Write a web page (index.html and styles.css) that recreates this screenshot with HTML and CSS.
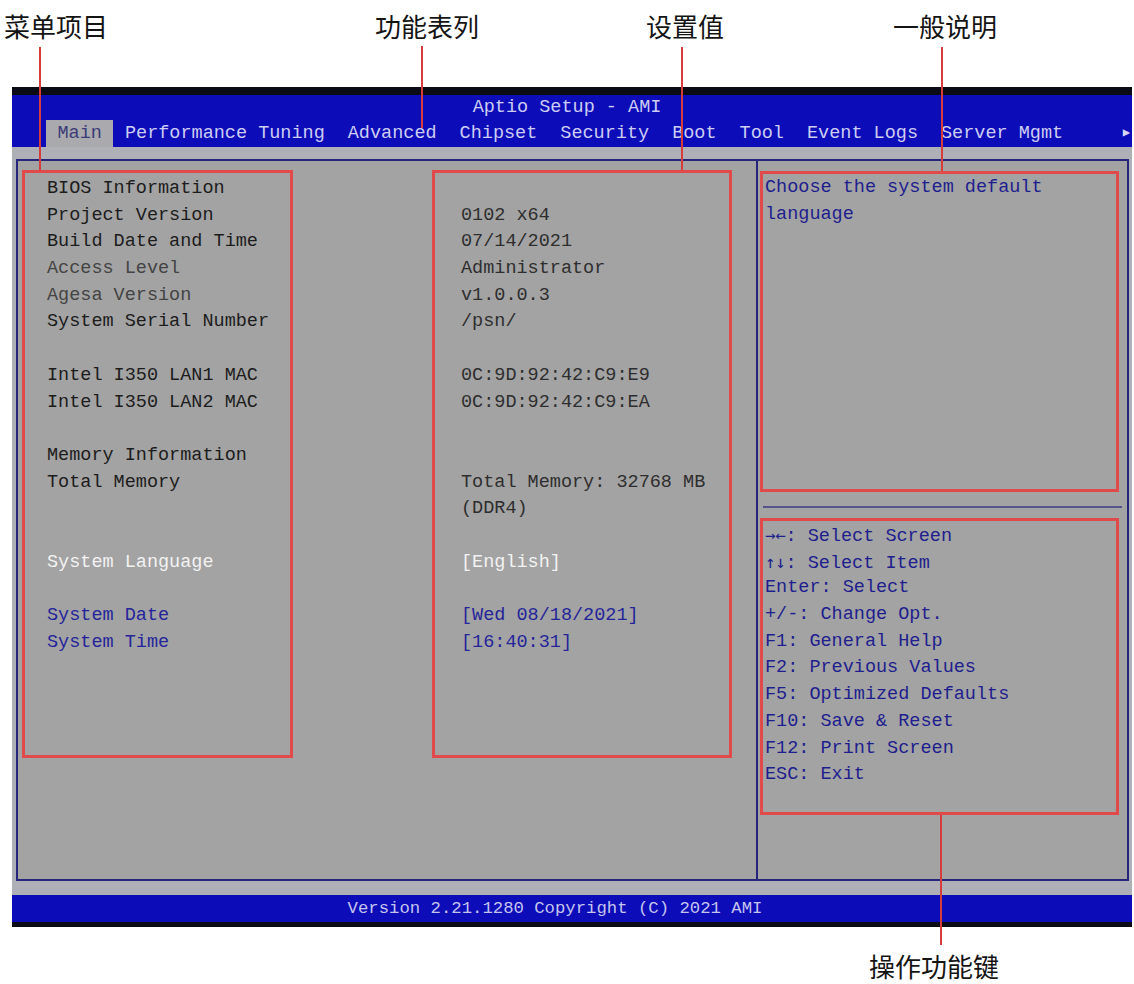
FILE: index.html
```html
<!DOCTYPE html>
<html lang="zh-CN">
<head>
  <meta charset="UTF-8">
  <meta name="viewport" content="width=device-width, initial-scale=1.0">
  <title>Aptio Setup - AMI</title>
  <link rel="stylesheet" href="styles.css">
</head>
<body>
  <div class="page">
    <div class="bios">
      <div class="bios-head">
        <div class="bios-title">Aptio Setup - AMI</div>
        <div class="tabs">
          <span class="tab active">Main</span>
          <span class="tab">Performance Tuning</span>
          <span class="tab">Advanced</span>
          <span class="tab">Chipset</span>
          <span class="tab">Security</span>
          <span class="tab">Boot</span>
          <span class="tab">Tool</span>
          <span class="tab">Event Logs</span>
          <span class="tab">Server Mgmt</span>
          <span class="tab-more">&#9654;</span>
        </div>
      </div>

      <div class="bios-body">
        <div class="panel">
          <div class="main-pane">
            <div class="col col-labels">
              <div class="row">BIOS Information</div>
              <div class="row">Project Version</div>
              <div class="row">Build Date and Time</div>
              <div class="row dim">Access Level</div>
              <div class="row dim">Agesa Version</div>
              <div class="row">System Serial Number</div>
              <div class="row"></div>
              <div class="row">Intel I350 LAN1 MAC</div>
              <div class="row">Intel I350 LAN2 MAC</div>
              <div class="row"></div>
              <div class="row">Memory Information</div>
              <div class="row">Total Memory</div>
              <div class="row"></div>
              <div class="row"></div>
              <div class="row selected">System Language</div>
              <div class="row"></div>
              <div class="row option">System Date</div>
              <div class="row option">System Time</div>
            </div>
            <div class="col col-values">
              <div class="row"></div>
              <div class="row">0102 x64</div>
              <div class="row">07/14/2021</div>
              <div class="row">Administrator</div>
              <div class="row">v1.0.0.3</div>
              <div class="row">/psn/</div>
              <div class="row"></div>
              <div class="row">0C:9D:92:42:C9:E9</div>
              <div class="row">0C:9D:92:42:C9:EA</div>
              <div class="row"></div>
              <div class="row"></div>
              <div class="row">Total Memory: 32768 MB</div>
              <div class="row">(DDR4)</div>
              <div class="row"></div>
              <div class="row selected">[English]</div>
              <div class="row"></div>
              <div class="row option">[Wed 08/18/2021]</div>
              <div class="row option">[16:40:31]</div>
            </div>
          </div>

          <div class="side-pane">
            <div class="help">Choose the system default language</div>
            <div class="side-rule"></div>
            <div class="keys">
              <div class="row"><span class="arrows">&rarr;&larr;</span>: Select Screen</div>
              <div class="row"><span class="arrows">&uarr;&darr;</span>: Select Item</div>
              <div class="row">Enter: Select</div>
              <div class="row">+/-: Change Opt.</div>
              <div class="row">F1: General Help</div>
              <div class="row">F2: Previous Values</div>
              <div class="row">F5: Optimized Defaults</div>
              <div class="row">F10: Save &amp; Reset</div>
              <div class="row">F12: Print Screen</div>
              <div class="row">ESC: Exit</div>
            </div>
          </div>
        </div>
      </div>

      <div class="bios-foot">Version 2.21.1280 Copyright (C) 2021 AMI</div>
    </div>

    <!-- callouts -->
    <span class="callout callout-menu">菜单项目</span>
    <span class="callout callout-tabs">功能表列</span>
    <span class="callout callout-value">设置值</span>
    <span class="callout callout-help">一般说明</span>
    <span class="callout callout-keys">操作功能键</span>

    <i class="line line-menu"></i>
    <i class="line line-tabs"></i>
    <i class="line line-value"></i>
    <i class="line line-help"></i>
    <i class="line line-keys"></i>
  </div>
</body>
</html>
```

FILE: styles.css
```css
* {
  box-sizing: border-box;
}
body {
  margin: 0;
  background-color: #fff;
  font-family: "Liberation Mono", "DejaVu Sans Mono", monospace;
}
.page {
  position: relative;
  width: 1134px;
  height: 984px;
  padding-top: 87px;
  overflow: hidden;
}

/* bios screen */
.bios {
  margin-left: 12px;
  width: 1120px;
  border-top: 8px solid #0b0b16;
  background-color: #afafb8;
  font-size: 18.5px;
}
.bios-head {
  background-color: #0c0cb8;
  color: #cdcdf4;
}
.bios-title {
  height: 25px;
  line-height: 25px;
  text-align: center;
  padding-right: 10px;
}
.tabs {
  display: flex;
  height: 27px;
  padding-left: 34px;
}
.tab {
  padding: 0 11.5px;
  line-height: 27px;
  white-space: pre;
}
.tab.active {
  background-color: #a9a9ae;
  color: #3c3c78;
}
.tab-more {
  margin-left: auto;
  padding-right: 2px;
  font-size: 12px;
  line-height: 27px;
  color: #d6d6f6;
}

.bios-body {
  padding: 12px 3px 14px 4px;
}
.panel {
  display: flex;
  height: 722px;
  border: 2px solid #25257c;
  background-color: #a3a3a3;
}
.main-pane {
  display: flex;
  align-items: flex-start;
  gap: 139px;
  width: 740px;
  padding: 9px 0 0 4px;
  border-right: 2px solid #25257c;
}
.col {
  height: 588px;
  border: 3px solid #e14a4a;
  padding-top: 3px;
  line-height: 26.7px;
}
.col-labels {
  width: 271px;
  padding-left: 22px;
  color: #1c1c1c;
}
.col-values {
  width: 300px;
  padding-left: 26px;
  color: #2e2e2e;
}
.row {
  height: 26.7px;
  white-space: pre;
}
.row.dim {
  color: #444;
}
.row.selected {
  color: #f2f2f2;
}
.row.option {
  color: #25259a;
}

.side-pane {
  flex: 1;
  padding: 10px 8px 0 2px;
}
.help {
  height: 321px;
  border: 3px solid #e14a4a;
  padding: 1px 0 0 2px;
  line-height: 26.7px;
  color: #1e1e8e;
}
.side-rule {
  height: 2px;
  margin: 14px -3px 10px 3px;
  background-color: #55558c;
}
.keys {
  height: 297px;
  border: 3px solid #e14a4a;
  padding: 1px 0 0 2px;
  line-height: 26.7px;
  color: #1e1e8e;
}
.arrows {
  font-family: "DejaVu Sans Mono", monospace;
  font-size: 17px;
}

.bios-foot {
  height: 32px;
  padding-right: 34px;
  border-bottom: 5px solid #0b0b16;
  background-color: #0c0cb8;
  color: #c4c4ee;
  font-size: 17.3px;
  line-height: 27px;
  text-align: center;
  white-space: pre;
}

/* annotation callouts */
.callout {
  position: absolute;
  font-family: "Noto Sans CJK SC", sans-serif;
  font-size: 26px;
  line-height: 26px;
  color: #141414;
  white-space: nowrap;
}
.callout-menu { left: 4px; top: 13px; }
.callout-tabs { left: 375px; top: 13px; }
.callout-value { left: 646px; top: 13px; }
.callout-help { left: 893px; top: 13px; }
.callout-keys { left: 869px; top: 953px; }

.line {
  position: absolute;
  width: 2px;
  background-color: #d63c3c;
}
.line-menu { left: 39px; top: 47px; height: 123px; }
.line-tabs { left: 421px; top: 46px; height: 82px; }
.line-value { left: 681px; top: 47px; height: 123px; }
.line-help { left: 941px; top: 47px; height: 124px; }
.line-keys { left: 940px; top: 815px; height: 130px; }
```
